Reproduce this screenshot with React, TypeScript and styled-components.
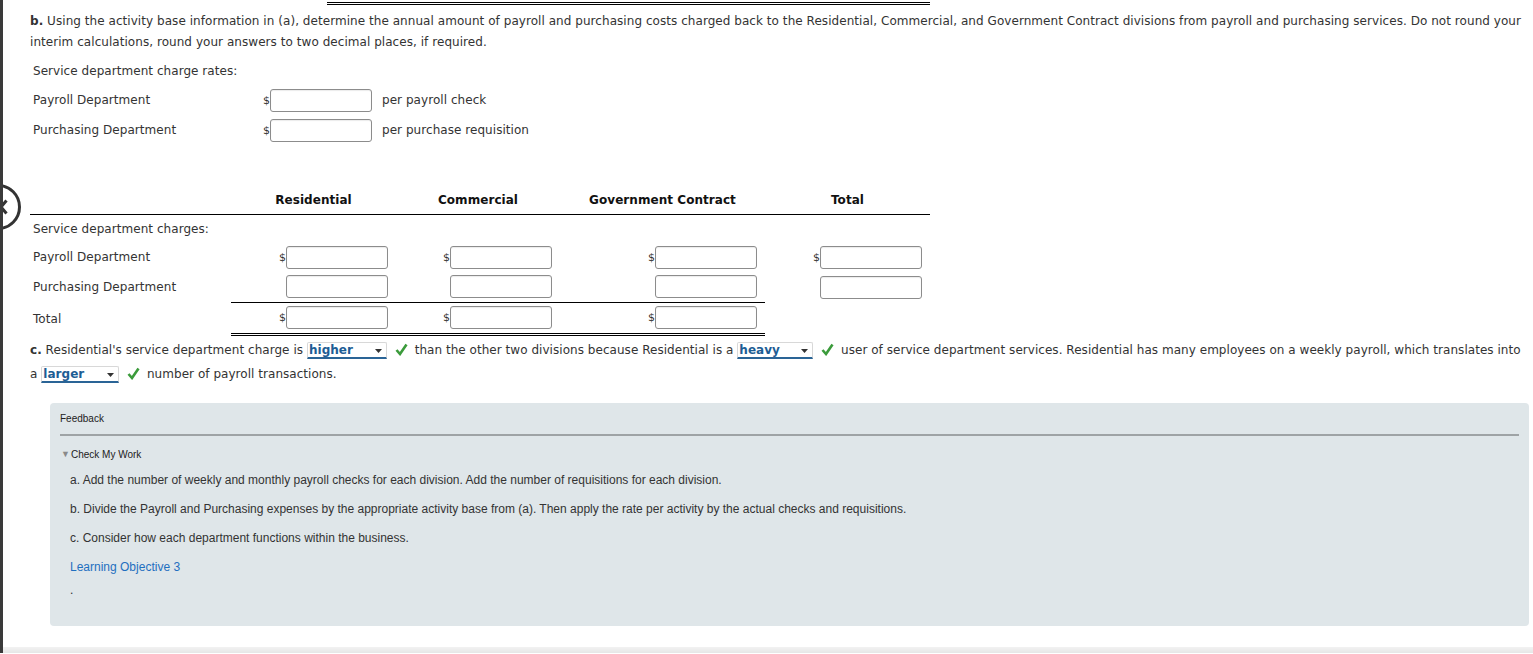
import React from 'react';
import styled, { createGlobalStyle } from 'styled-components';

const GlobalStyle = createGlobalStyle`
   html, body {
      margin: 0;
      padding: 0;
      background: #fff;
   }
   body {
      font-family: 'DejaVu Sans', Verdana, sans-serif;
      font-size: 12px;
      letter-spacing: 0.05px;
      color: #333;
   }
`;

const columns = ['Residential', 'Commercial', 'Government Contract', 'Total'];

const Page = () => {
   return (
      <Frame>
         <BackCircle>
            <svg width='9' height='16' viewBox='0 0 9 16'>
               <path d='M7.5 1.5L2 8l5.5 6.5' stroke='#333' strokeWidth='3' fill='none' />
            </svg>
         </BackCircle>
         <Content>
            <TopRule />
            <Para>
               <Marker>b.</Marker> Using the activity base information in (a), determine the
               annual amount of payroll and purchasing costs charged back to the Residential,
               Commercial, and Government Contract divisions from payroll and purchasing
               services. Do not round your interim calculations, round your answers to two
               decimal places, if required.
            </Para>

            <Rates>
               <RateTitle>Service department charge rates:</RateTitle>
               <RateRow>
                  <RateLabel>Payroll Department</RateLabel>
                  <Dollar>$</Dollar>
                  <Field />
                  <Unit>per payroll check</Unit>
               </RateRow>
               <RateRow>
                  <RateLabel>Purchasing Department</RateLabel>
                  <Dollar>$</Dollar>
                  <Field />
                  <Unit>per purchase requisition</Unit>
               </RateRow>
            </Rates>

            <Charges>
               <colgroup>
                  <col style={{ width: 201 }} />
                  <col style={{ width: 165 }} />
                  <col style={{ width: 164 }} />
                  <col style={{ width: 205 }} />
                  <col style={{ width: 165 }} />
               </colgroup>
               <thead>
                  <tr>
                     <HeadCell />
                     {columns.map((c) => (
                        <HeadCell key={c}>{c}</HeadCell>
                     ))}
                  </tr>
               </thead>
               <tbody>
                  <tr>
                     <LabelCell $height={27}>Service department charges:</LabelCell>
                     <td colSpan={4} />
                  </tr>
                  <tr>
                     <LabelCell $height={30}>Payroll Department</LabelCell>
                     {columns.map((c) => (
                        <AmountCell key={c}>
                           <Dollar>$</Dollar>
                           <Field />
                        </AmountCell>
                     ))}
                  </tr>
                  <tr>
                     <LabelCell $height={30}>Purchasing Department</LabelCell>
                     {columns.map((c) => (
                        <AmountCell key={c} $rule={c === 'Total' ? 'none' : 'single'}>
                           <Field />
                        </AmountCell>
                     ))}
                  </tr>
                  <tr>
                     <LabelCell $height={30} $drop={2}>
                        Total
                     </LabelCell>
                     {columns.slice(0, 3).map((c) => (
                        <AmountCell key={c} $rule='double'>
                           <Dollar>$</Dollar>
                           <Field />
                        </AmountCell>
                     ))}
                     <td />
                  </tr>
               </tbody>
            </Charges>

            <Answer>
               <Marker>c.</Marker> Residential's service department charge is{' '}
               <Dropdown value='higher' width={80} /> <Check /> than the other two divisions
               because Residential is a <Dropdown value='heavy' width={76} /> <Check /> user
               of service department services. Residential has many employees on a weekly
               payroll, which translates into a <Dropdown value='larger' width={78} />{' '}
               <Check /> number of payroll transactions.
            </Answer>

            <Feedback>
               <FeedbackTitle>Feedback</FeedbackTitle>
               <FeedbackRule />
               <Summary>
                  <Triangle>▼</Triangle>Check My Work
               </Summary>
               <Hint $gap={11}>
                  a. Add the number of weekly and monthly payroll checks for each division.
                  Add the number of requisitions for each division.
               </Hint>
               <Hint>
                  b. Divide the Payroll and Purchasing expenses by the appropriate activity
                  base from (a). Then apply the rate per activity by the actual checks and
                  requisitions.
               </Hint>
               <Hint>c. Consider how each department functions within the business.</Hint>
               <Hint>
                  <LinkText>Learning Objective 3</LinkText>
               </Hint>
               <Hint $gap={6}>.</Hint>
            </Feedback>
         </Content>
         <BottomBand />
      </Frame>
   );
};

interface DropdownProps {
   value: string;
   width: number;
}

const Dropdown = ({ value, width }: DropdownProps) => (
   <Select $width={width}>
      {value}
      <Arrow width='7' height='4' viewBox='0 0 7 4'>
         <path d='M0 0h7L3.5 4z' fill='#333' />
      </Arrow>
   </Select>
);

const Check = () => (
   <CheckMark width='13' height='13' viewBox='0 0 13 13'>
      <path d='M1.5 7l3.5 4L11.5 1.5' stroke='#3b9b3b' strokeWidth='2.6' fill='none' />
   </CheckMark>
);

export default function App() {
   return (
      <>
         <GlobalStyle />
         <Page />
      </>
   );
}

const Frame = styled.div`
   position: relative;
   border-left: 3px solid #3a3a3a;
   min-height: 651px;
   overflow: hidden;
`;

const BackCircle = styled.div`
   position: absolute;
   left: -28px;
   top: 184px;
   width: 46px;
   height: 46px;
   border: 3px solid #333;
   border-radius: 50%;
   background: #fff;
   display: flex;
   align-items: center;
   padding-left: 21px;
   box-sizing: border-box;
`;

const Content = styled.div`
   padding: 2px 4px 21px 27px;
`;

const TopRule = styled.div`
   margin-left: 297px;
   width: 603px;
   border-top: 3px double #000;
`;

const Marker = styled.b`
   font-weight: bold;
`;

const Para = styled.p`
   margin: 6px 8px 0 0;
   line-height: 21px;
`;

const Rates = styled.div`
   margin-top: 5px;
   padding-left: 3px;
`;

const RateTitle = styled.div`
   height: 27px;
   line-height: 27px;
`;

const RateRow = styled.div`
   display: flex;
   align-items: center;
   height: 30px;
`;

const RateLabel = styled.div`
   width: 229px;
`;

const Dollar = styled.span`
   font-size: 11px;
   display: inline-block;
   width: 8px;
   text-align: right;
`;

const Field = styled.span`
   display: inline-block;
   box-sizing: border-box;
   width: 102px;
   height: 23px;
   border: 1px solid #8c8c8c;
   border-radius: 3px;
   background: #fff;
   box-shadow: inset 0 1px 1px rgba(0, 0, 0, 0.08);
   vertical-align: middle;
`;

const Unit = styled.span`
   margin-left: 10px;
`;

const Charges = styled.table`
   margin-top: 41px;
   border-collapse: collapse;
   table-layout: fixed;
   width: 900px;
`;

const HeadCell = styled.th`
   height: 28px;
   padding: 0;
   text-align: center;
   font-weight: bold;
   color: #111;
   border-bottom: 1px solid #000;
   vertical-align: middle;
`;

const LabelCell = styled.td<{ $height: number; $drop?: number }>`
   height: ${(p) => p.$height}px;
   padding: ${(p) => p.$drop ?? 0}px 0 0 3px;
   vertical-align: middle;
   white-space: nowrap;
`;

const AmountCell = styled.td<{ $rule?: 'none' | 'single' | 'double' }>`
   padding: 0 8px 0 0;
   text-align: right;
   vertical-align: middle;
   white-space: nowrap;
   border-bottom: ${(p) =>
      p.$rule === 'single' ? '1px solid #000' : p.$rule === 'double' ? '3px double #000' : 'none'};

   ${Dollar} {
      vertical-align: middle;
   }
`;

const Answer = styled.p`
   margin: 2px 6px 0 0;
   line-height: 24px;
   letter-spacing: 0.04px;
`;

const Select = styled.span<{ $width: number }>`
   position: relative;
   display: inline-block;
   box-sizing: border-box;
   width: ${(p) => p.$width}px;
   height: 17px;
   padding: 0 0 0 1px;
   border: 1px solid #d8d8d8;
   border-bottom: 2px solid #2a6496;
   border-radius: 2px 2px 0 0;
   background: #fff;
   color: #1d5d94;
   font-weight: bold;
   font-size: 12px;
   line-height: 14px;
   vertical-align: baseline;
`;

const Arrow = styled.svg`
   position: absolute;
   right: 4px;
   top: 6px;
`;

const CheckMark = styled.svg`
   margin: 0 3px 0 4px;
   vertical-align: -2px;
`;

const Feedback = styled.section`
   margin: 17px 0 0 20px;
   padding: 10px 10px 27px;
   background: #dfe6e9;
   border-radius: 4px;
   font-family: 'Liberation Sans', Arial, sans-serif;
   letter-spacing: 0;
   color: #222;
`;

const FeedbackTitle = styled.div`
   font-size: 10px;
   line-height: 12px;
`;

const FeedbackRule = styled.div`
   margin-top: 9px;
   border-top: 2px solid #9ea3a5;
`;

const Summary = styled.div`
   margin-top: 12px;
   font-size: 10px;
   line-height: 13px;
   display: flex;
   align-items: center;
`;

const Triangle = styled.span`
   color: #8a8a8a;
   font-size: 9px;
   margin: 0 1px 0 1px;
`;

const Hint = styled.p<{ $gap?: number }>`
   margin: ${(p) => p.$gap ?? 12}px 0 0 10px;
   font-size: 12px;
   line-height: 17px;
   color: #333;
`;

const LinkText = styled.span`
   color: #1e6fc0;
`;

const BottomBand = styled.div`
   height: 6px;
   background: linear-gradient(#f2f2f2, #e6e6e6);
`;
